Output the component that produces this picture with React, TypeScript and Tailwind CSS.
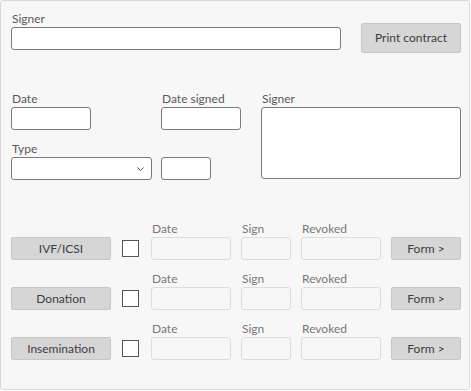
import { FC } from "react";

const font = { fontFamily: "Lato, 'Open Sans', sans-serif" };

const Label: FC<{ text: string; muted?: boolean }> = ({ text, muted }) => (
    <div className={`h-[16px] text-[12px] leading-[16px] pl-[1px] ${muted ? 'text-[#777777]' : 'text-[#595959]'}`}>
        {text}
    </div>
);

const Field: FC<{ w: string; h?: string; disabled?: boolean }> = ({ w, h = 'h-[23px]', disabled }) => (
    <div
        className={`${w} ${h} shrink-0 rounded-[3px] border ${disabled
            ? 'border-[#dcdcdc] bg-[#f7f7f7]'
            : 'border-[#7a7a7a] bg-white'
            }`}
    />
);

const GrayButton: FC<{ text: string; w: string; h?: string }> = ({ text, w, h = 'h-[23px]' }) => (
    <button className={`${w} ${h} shrink-0 flex items-center justify-center rounded-[2px] border border-[#c6c6c6] bg-[#d6d6d6] text-[12px] text-[#3c3c3c]`}>
        {text}
    </button>
);

const ProcedureRow: FC<{ name: string }> = ({ name }) => (
    <div className="flex items-end">
        <GrayButton text={name} w="w-[100px]" />
        <div className="ml-[11px] mb-[3px] h-[17px] w-[17px] shrink-0 border border-[#555555] bg-white" />
        <div className="ml-[12px] flex flex-col">
            <Label text="Date" muted />
            <Field w="w-[80px]" disabled />
        </div>
        <div className="ml-[10px] flex flex-col">
            <Label text="Sign" muted />
            <Field w="w-[50px]" disabled />
        </div>
        <div className="ml-[10px] flex flex-col">
            <Label text="Revoked" muted />
            <Field w="w-[80px]" disabled />
        </div>
        <div className="ml-[10px]">
            <GrayButton text="Form >" w="w-[70px]" />
        </div>
    </div>
);

export default function App() {
    return (
        <div className="bg-white" style={font}>
            <div className="w-[470px] h-[390px] rounded-[3px] border border-[#d9d9d9] bg-[#f7f7f7] pt-[10px] pl-[10px]">
                {/* Signer + print */}
                <div className="flex items-start">
                    <div className="flex flex-col">
                        <Label text="Signer" />
                        <Field w="w-[330px]" />
                    </div>
                    <div className="ml-[20px] mt-[12px]">
                        <GrayButton text="Print contract" w="w-[100px]" h="h-[30px]" />
                    </div>
                </div>

                {/* Dates / type / signer */}
                <div className="mt-[38px] flex items-start">
                    <div className="w-[150px] shrink-0 flex flex-col">
                        <Label text="Date" />
                        <Field w="w-[80px]" />
                        <div className="mt-[11px]">
                            <Label text="Type" />
                        </div>
                        <div className="relative h-[23px] w-[141px] rounded-[3px] border border-[#7a7a7a] bg-white">
                            <svg className="absolute right-[7px] top-[9px]" width="7" height="4" viewBox="0 0 7 4">
                                <path d="M0.5 0.5 L3.5 3.5 L6.5 0.5" fill="none" stroke="#444444" strokeWidth="1" />
                            </svg>
                        </div>
                    </div>
                    <div className="w-[100px] shrink-0 flex flex-col">
                        <Label text="Date signed" />
                        <Field w="w-[80px]" />
                        <div className="mt-[27px]">
                            <Field w="w-[50px]" />
                        </div>
                    </div>
                    <div className="flex flex-col">
                        <Label text="Signer" />
                        <Field w="w-[200px]" h="h-[72px]" />
                    </div>
                </div>

                {/* Procedures */}
                <div className="mt-[41px] flex flex-col gap-[11px]">
                    <ProcedureRow name="IVF/ICSI" />
                    <ProcedureRow name="Donation" />
                    <ProcedureRow name="Insemination" />
                </div>
            </div>
        </div>
    );
}
